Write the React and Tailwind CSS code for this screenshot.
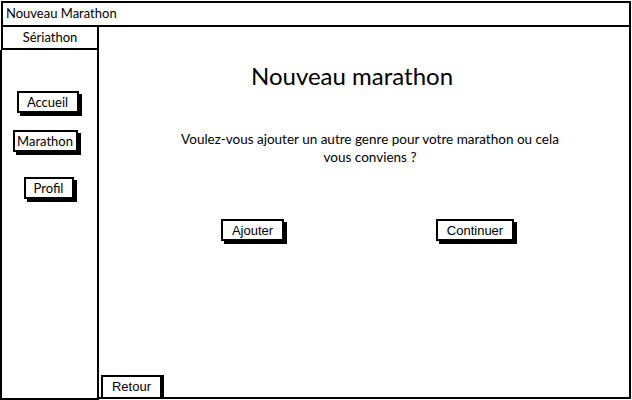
import React from "react";

const font = "font-['Lato','Open_Sans',sans-serif]";

const SketchButton = ({ label, className = "" }) => (
  <div
    className={`inline-flex items-center justify-center h-[22px] border-2 border-black bg-white shadow-[3px_3px_0_#000] text-[13px] leading-none ${className}`}
  >
    {label}
  </div>
);

const App = () => {
  return (
    <div className={`w-[632px] h-[400px] bg-white text-black flex flex-col ${font}`}>
      <div className="h-[26px] ml-[1px] mr-[1px] mt-[1px] border-2 border-black flex items-center pl-[3px] text-[13px]">
        Nouveau Marathon
      </div>
      <div className="flex flex-1 min-h-0">
        <div className="w-[99px] flex flex-col">
          <div className="h-[23px] ml-[1px] border-2 border-t-0 border-black flex items-center justify-center text-[13px]">
            Sériathon
          </div>
          <div className="flex-1 border-2 border-black border-t-0 flex flex-col items-center">
            <SketchButton label="Accueil" className="w-[62px] mt-[41px] mr-[4px]" />
            <SketchButton label="Marathon" className="w-[65px] mt-[17px] mr-[9px]" />
            <SketchButton label="Profil" className="w-[50px] mt-[25px] mr-[2px]" />
          </div>
        </div>
        <div className="flex-1 flex flex-col border-r-2 border-b-2 border-black mr-[1px] mb-[1px]">
          <h1 className="text-[24px] leading-[32px] text-center mt-[33px] mr-[24px]">
            Nouveau marathon
          </h1>
          <p className="text-[13.5px] leading-[18px] text-center mt-[38px] ml-[12px]">
            Voulez-vous ajouter un autre genre pour votre marathon ou cela
            <br />
            vous conviens ?
          </p>
          <div className="flex mt-[53px] ml-[122px] gap-[152px] font-['Liberation_Sans',Arial,sans-serif]">
            <SketchButton label="Ajouter" className="w-[63px]" />
            <SketchButton label="Continuer" className="w-[78px]" />
          </div>
          <div className="mt-auto ml-[2px]">
            <div className="inline-flex items-center justify-center w-[61px] h-[22px] border-2 border-b-0 border-black shadow-[2px_0_0_#000] text-[13px] font-['Liberation_Sans',Arial,sans-serif]">
              Retour
            </div>
          </div>
        </div>
      </div>
    </div>
  );
};

export default App;
